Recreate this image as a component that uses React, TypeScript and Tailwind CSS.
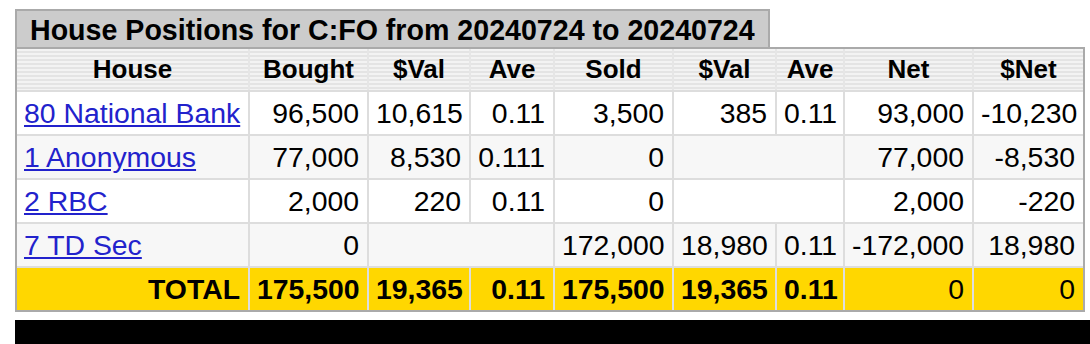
import React from 'react';

type Row = {
  house: string;
  bought: string;
  bval: string;
  bave: string;
  sold: string;
  sval: string;
  save: string;
  net: string;
  dnet: string;
};

const rows: Row[] = [
  { house: '80 National Bank', bought: '96,500', bval: '10,615', bave: '0.11', sold: '3,500', sval: '385', save: '0.11', net: '93,000', dnet: '-10,230' },
  { house: '1 Anonymous', bought: '77,000', bval: '8,530', bave: '0.111', sold: '0', sval: '', save: '', net: '77,000', dnet: '-8,530' },
  { house: '2 RBC', bought: '2,000', bval: '220', bave: '0.11', sold: '0', sval: '', save: '', net: '2,000', dnet: '-220' },
  { house: '7 TD Sec', bought: '0', bval: '', bave: '', sold: '172,000', sval: '18,980', save: '0.11', net: '-172,000', dnet: '18,980' },
];

const headers = ['House', 'Bought', '$Val', 'Ave', 'Sold', '$Val', 'Ave', 'Net', '$Net'];
const widths = [231, 119, 102, 84, 119, 103, 68, 129, 111];

const td = 'border-t-2 border-l-2 border-[#ddd] pl-[7px] pr-[8px] py-[5px] leading-[32px] text-right whitespace-nowrap';

export default function App() {
  return (
    <div className="min-h-[344px] bg-white pt-[9px] pl-[15px] text-black [font-family:'Liberation_Sans',Arial,sans-serif]">
      {/* CAPTION */}
      <div className="w-[755px] h-[38px] border-2 border-b-0 border-[#aaa] bg-[#ccc] pl-[13px] pt-[2px] flex items-center text-[28.6px] font-bold leading-none whitespace-nowrap">
        House Positions for C:FO from 20240724 to 20240724
      </div>

      {/* TABLE */}
      <div className="w-[1070px] border-2 border-[#aaa] bg-white">
        <table className="table-fixed border-separate border-spacing-0 w-[1066px] text-[28.4px]">
          <colgroup>
            {widths.map((w, i) => (
              <col key={i} style={{ width: w }} />
            ))}
          </colgroup>
          <thead>
            <tr>
              {headers.map((h, i) => (
                <th
                  key={i}
                  className={`py-[5px] leading-[31px] text-[26px] font-bold text-center bg-[repeating-linear-gradient(to_bottom,#f3f3f3_0px,#f3f3f3_2px,#e4e4e4_2px,#e4e4e4_4px)] ${
                    i === 0 ? '' : 'border-l-2 border-[#e6e6e6]'
                  }`}
                >
                  {h}
                </th>
              ))}
            </tr>
          </thead>
          <tbody>
            {rows.map((r, i) => (
              <tr key={r.house} className={i % 2 === 0 ? 'bg-white' : 'bg-[#f7f7f7]'}>
                <td className="border-t-2 border-[#ddd] pl-[7px] pr-[8px] py-[5px] leading-[32px] text-left whitespace-nowrap">
                  <a href="#" className="text-[#2222cc] underline underline-offset-[2px]">
                    {r.house}
                  </a>
                </td>
                <td className={td}>{r.bought}</td>
                {r.bval === '' ? (
                  <td colSpan={2} className={td}></td>
                ) : (
                  <>
                    <td className={td}>{r.bval}</td>
                    <td className={td}>{r.bave}</td>
                  </>
                )}
                <td className={td}>{r.sold}</td>
                {r.sval === '' ? (
                  <td colSpan={2} className={td}></td>
                ) : (
                  <>
                    <td className={td}>{r.sval}</td>
                    <td className={td}>{r.save}</td>
                  </>
                )}
                <td className={td}>{r.net}</td>
                <td className={td}>{r.dnet}</td>
              </tr>
            ))}
            <tr className="bg-[#ffd700]">
              <td className="border-t-2 border-[#ddd] pl-[7px] pr-[8px] py-[5px] leading-[32px] text-right font-bold">TOTAL</td>
              <td className={`${td} font-bold`}>175,500</td>
              <td className={`${td} font-bold`}>19,365</td>
              <td className={`${td} font-bold`}>0.11</td>
              <td className={`${td} font-bold`}>175,500</td>
              <td className={`${td} font-bold`}>19,365</td>
              <td className={`${td} font-bold`}>0.11</td>
              <td className={td}>0</td>
              <td className={td}>0</td>
            </tr>
          </tbody>
        </table>
      </div>

      {/* FOOTER BAR */}
      <div className="mt-[8px] h-[30px] bg-black" />
    </div>
  );
}
